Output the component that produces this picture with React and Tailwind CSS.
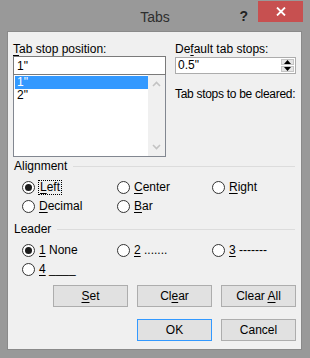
import React from "react";

// underline the access key letter
const U = ({ children }) => <span className="underline underline-offset-[2px]">{children}</span>;

const Radio = ({ checked, focus, children }) => (
  <div className="flex items-center gap-[4px] h-[19px]">
    <span className="w-[13px] h-[13px] rounded-full border border-[#333333] bg-white flex items-center justify-center shrink-0">
      {checked && <span className="w-[7px] h-[7px] rounded-full bg-[#1b1b1b]" />}
    </span>
    <span className={focus ? "outline outline-1 outline-dotted outline-black px-[1px] leading-[13px]" : "leading-[13px]"}>
      {children}
    </span>
  </div>
);

const Btn = ({ children, active }) => (
  <button
    className={`w-[75px] h-[22px] bg-[#e1e1e1] border ${active ? "border-[#3399ff]" : "border-[#adadad]"} text-black text-[12px]`}
  >
    {children}
  </button>
);

const GroupHead = ({ children }) => (
  <div className="flex items-center gap-[6px] h-[16px] pl-[6px] pr-[6px]">
    <span>{children}</span>
    <div className="flex-1 h-px bg-[#dcdcdc]" />
  </div>
);

const Chevron = ({ down }) => (
  <svg width="9" height="6" viewBox="0 0 9 6">
    <path
      d={down ? "M1 1 L4.5 4.5 L8 1" : "M1 5 L4.5 1.5 L8 5"}
      fill="none"
      stroke="#c3c3c3"
      strokeWidth="1.6"
    />
  </svg>
);

export default function App() {
  return (
    <div className="w-[310px] h-[358px] bg-[#999999] flex flex-col font-['Liberation_Sans',Arial,sans-serif] text-[12px] text-black overflow-hidden">
      {/* title bar */}
      <div className="h-[31px] grid grid-cols-[1fr_auto_1fr]">
        <div />
        <div className="pt-[7px] text-[14px] text-[#2e2e2e]">Tabs</div>
        <div className="flex justify-end items-start pr-[7px] pt-[1px]">
          <span className="mt-[5px] mr-[10px] text-[14px] font-bold text-[#222]">?</span>
          <div className="w-[45px] h-[21px] bg-[#c75050] flex items-center justify-center">
            <svg width="10" height="9" viewBox="0 0 10 9">
              <path d="M1 0.5 L9 8.5 M9 0.5 L1 8.5" stroke="white" strokeWidth="1.8" />
            </svg>
          </div>
        </div>
      </div>

      {/* client area */}
      <div className="ml-[7px] w-[295px] h-[319px] bg-[#f0f0f0] border border-[#8a8a8a] flex flex-col">
        <div className="flex pt-[8px] pl-[5px] gap-[9px]">
          {/* left column */}
          <div className="w-[153px] flex flex-col">
            <div className="h-[16px]">
              <U>T</U>ab stop position:
            </div>
            <div className="h-[19px] border border-[#7a7a7a] bg-white pl-[3px] flex items-center">1"</div>
            <div className="h-[82px] border border-[#828790] border-t-0 bg-white flex pl-[1px] pt-[1px]">
              <div className="flex-1 flex flex-col">
                <div className="h-[13px] bg-[#3399ff] text-white pl-[2px] leading-[13px]">1"</div>
                <div className="h-[13px] pl-[2px] leading-[13px]">2"</div>
              </div>
              <div className="w-[17px] -mt-[1px] bg-[#f0f0f0] flex flex-col justify-between items-center py-[6px]">
                <Chevron />
                <Chevron down />
              </div>
            </div>
          </div>

          {/* right column */}
          <div className="w-[121px] flex flex-col">
            <div className="h-[16px] whitespace-nowrap">
              De<U>f</U>ault tab stops:
            </div>
            <div className="mt-[1px] h-[17px] border border-[#acacac] bg-white flex">
              <div className="flex-1 pl-[2px] leading-[15px]">0.5"</div>
              <div className="w-[15px] flex flex-col gap-px p-px">
                <div className="flex-1 bg-[#e5e5e5] border border-[#c5c5c5] flex items-center justify-center">
                  <svg width="7" height="4" viewBox="0 0 7 4"><path d="M0 4 L3.5 0 L7 4 Z" fill="black" /></svg>
                </div>
                <div className="flex-1 bg-[#e5e5e5] border border-[#c5c5c5] flex items-center justify-center">
                  <svg width="7" height="4" viewBox="0 0 7 4"><path d="M0 0 L3.5 4 L7 0 Z" fill="black" /></svg>
                </div>
              </div>
            </div>
            <div className="mt-[11px] h-[16px] whitespace-nowrap tracking-[-0.3px]">Tab stops to be cleared:</div>
          </div>
        </div>

        {/* alignment */}
        <div className="mt-[1px]">
          <GroupHead>Alignment</GroupHead>
        </div>
        <div className="mt-[4px] pl-[14px] grid grid-cols-[95px_95px_95px]">
          <Radio checked focus>
            <U>L</U>eft
          </Radio>
          <Radio>
            <U>C</U>enter
          </Radio>
          <Radio>
            <U>R</U>ight
          </Radio>
          <Radio>
            <U>D</U>ecimal
          </Radio>
          <Radio>
            <U>B</U>ar
          </Radio>
        </div>

        {/* leader */}
        <div className="mt-[5px]">
          <GroupHead>Leader</GroupHead>
        </div>
        <div className="mt-[4px] pl-[14px] grid grid-cols-[95px_95px_95px]">
          <Radio checked>
            <U>1</U> None
          </Radio>
          <Radio>
            <U>2</U> .......
          </Radio>
          <Radio>
            <U>3</U> -------
          </Radio>
          <Radio>
            <U>4</U> ____
          </Radio>
        </div>

        {/* buttons */}
        <div className="mt-[6px] flex justify-end gap-[9px] pr-[5px]">
          <Btn>
            <U>S</U>et
          </Btn>
          <Btn>
            Cl<U>e</U>ar
          </Btn>
          <Btn>
            Clear <U>A</U>ll
          </Btn>
        </div>
        <div className="mt-[12px] flex justify-end gap-[9px] pr-[5px]">
          <Btn active>OK</Btn>
          <Btn>Cancel</Btn>
        </div>
      </div>
    </div>
  );
}
